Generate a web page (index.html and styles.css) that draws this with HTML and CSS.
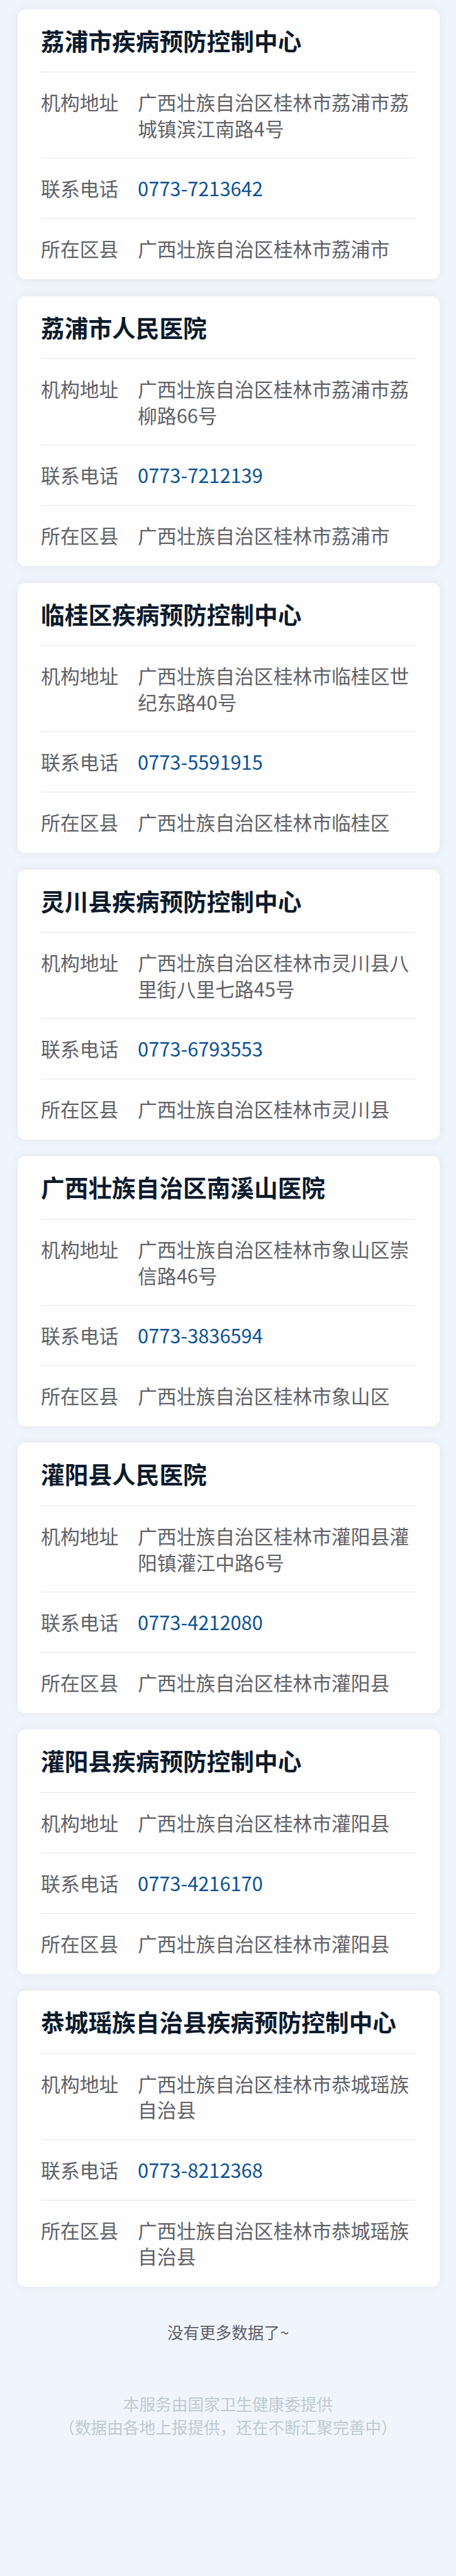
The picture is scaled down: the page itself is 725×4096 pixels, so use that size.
FILE: index.html
```html
<!DOCTYPE html>
<html lang="zh-CN">
<head>
<meta charset="utf-8">
<title>机构列表</title>
<link rel="stylesheet" href="styles.css">
</head>
<body>
<main class="list">
  <section class="card">
    <h2 class="card-title">荔浦市疾病预防控制中心</h2>
    <div class="row"><span class="label">机构地址</span><span class="value">广西壮族自治区桂林市荔浦市荔城镇滨江南路4号</span></div>
    <div class="row"><span class="label">联系电话</span><span class="value phone">0773-7213642</span></div>
    <div class="row"><span class="label">所在区县</span><span class="value">广西壮族自治区桂林市荔浦市</span></div>
  </section>
  <section class="card">
    <h2 class="card-title">荔浦市人民医院</h2>
    <div class="row"><span class="label">机构地址</span><span class="value">广西壮族自治区桂林市荔浦市荔柳路66号</span></div>
    <div class="row"><span class="label">联系电话</span><span class="value phone">0773-7212139</span></div>
    <div class="row"><span class="label">所在区县</span><span class="value">广西壮族自治区桂林市荔浦市</span></div>
  </section>
  <section class="card">
    <h2 class="card-title">临桂区疾病预防控制中心</h2>
    <div class="row"><span class="label">机构地址</span><span class="value">广西壮族自治区桂林市临桂区世纪东路40号</span></div>
    <div class="row"><span class="label">联系电话</span><span class="value phone">0773-5591915</span></div>
    <div class="row"><span class="label">所在区县</span><span class="value">广西壮族自治区桂林市临桂区</span></div>
  </section>
  <section class="card">
    <h2 class="card-title">灵川县疾病预防控制中心</h2>
    <div class="row"><span class="label">机构地址</span><span class="value">广西壮族自治区桂林市灵川县八里街八里七路45号</span></div>
    <div class="row"><span class="label">联系电话</span><span class="value phone">0773-6793553</span></div>
    <div class="row"><span class="label">所在区县</span><span class="value">广西壮族自治区桂林市灵川县</span></div>
  </section>
  <section class="card">
    <h2 class="card-title">广西壮族自治区南溪山医院</h2>
    <div class="row"><span class="label">机构地址</span><span class="value">广西壮族自治区桂林市象山区崇信路46号</span></div>
    <div class="row"><span class="label">联系电话</span><span class="value phone">0773-3836594</span></div>
    <div class="row"><span class="label">所在区县</span><span class="value">广西壮族自治区桂林市象山区</span></div>
  </section>
  <section class="card">
    <h2 class="card-title">灌阳县人民医院</h2>
    <div class="row"><span class="label">机构地址</span><span class="value">广西壮族自治区桂林市灌阳县灌阳镇灌江中路6号</span></div>
    <div class="row"><span class="label">联系电话</span><span class="value phone">0773-4212080</span></div>
    <div class="row"><span class="label">所在区县</span><span class="value">广西壮族自治区桂林市灌阳县</span></div>
  </section>
  <section class="card">
    <h2 class="card-title">灌阳县疾病预防控制中心</h2>
    <div class="row"><span class="label">机构地址</span><span class="value">广西壮族自治区桂林市灌阳县</span></div>
    <div class="row"><span class="label">联系电话</span><span class="value phone">0773-4216170</span></div>
    <div class="row"><span class="label">所在区县</span><span class="value">广西壮族自治区桂林市灌阳县</span></div>
  </section>
  <section class="card">
    <h2 class="card-title">恭城瑶族自治县疾病预防控制中心</h2>
    <div class="row"><span class="label">机构地址</span><span class="value">广西壮族自治区桂林市恭城瑶族自治县</span></div>
    <div class="row"><span class="label">联系电话</span><span class="value phone">0773-8212368</span></div>
    <div class="row"><span class="label">所在区县</span><span class="value">广西壮族自治区桂林市恭城瑶族自治县</span></div>
  </section>
</main>
<p class="no-more">没有更多数据了~</p>
<footer class="credit">
  <p>本服务由国家卫生健康委提供</p>
  <p>（数据由各地上报提供，还在不断汇聚完善中）</p>
</footer>
</body>
</html>
```

FILE: styles.css
```css
* {
  box-sizing: border-box;
  margin: 0;
  padding: 0;
}

body {
  min-height: 4096px;
  background: #f0f5fd;
  color: #606166;
  font-family: "Noto Sans CJK SC", sans-serif;
}

.list {
  display: flex;
  flex-direction: column;
  gap: 26.6px;
  padding: 14.6px 26.2px 0 27.5px;
}

.card {
  padding: 0 37.6px 1.2px;
  border-radius: 12px;
  background: #fefefe;
  box-shadow: 0 0 16px rgba(60, 60, 0, 0.08);
}

.card-title {
  height: 99.6px;
  color: #0d1b2c;
  font-size: 37.66px;
  font-weight: 700;
  line-height: 98px;
  white-space: nowrap;
}

.row {
  display: flex;
  gap: 30.8px;
  padding: 26.3px 0 27.3px;
  border-top: 1px solid #e6e8ea;
  font-size: 30.8px;
  line-height: 41.2px;
}

.label {
  flex: none;
}

.value {
  flex: 1;
}

.phone {
  color: #0d5193;
}

.no-more {
  margin-top: 53px;
  font-size: 25.65px;
  line-height: 38px;
  text-align: center;
}

.credit {
  margin-top: 76px;
  color: #bfcbd0;
  font-size: 25.65px;
  line-height: 37.4px;
  text-align: center;
}
```
